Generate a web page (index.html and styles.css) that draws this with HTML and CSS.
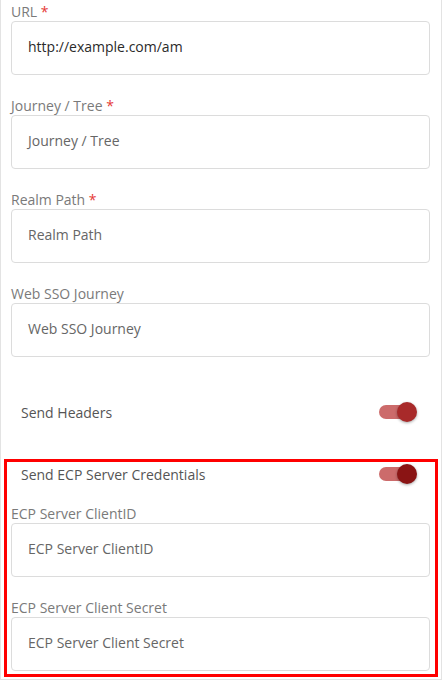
FILE: index.html
```html
<!DOCTYPE html>
<html>
<head>
<meta charset="utf-8">
<link rel="stylesheet" href="styles.css">
</head>
<body>
<div class="panel">
  <div class="field">
    <label class="label">URL <span class="req">*</span></label>
    <div class="input value">http://example.com/am</div>
  </div>
  <div class="field">
    <label class="label">Journey / Tree <span class="req">*</span></label>
    <div class="input">Journey / Tree</div>
  </div>
  <div class="field">
    <label class="label">Realm Path <span class="req">*</span></label>
    <div class="input">Realm Path</div>
  </div>
  <div class="field">
    <label class="label">Web SSO Journey</label>
    <div class="input">Web SSO Journey</div>
  </div>
  <div class="toggle-row first">
    <span class="toggle-label">Send Headers</span>
    <span class="switch"><span class="track"></span><span class="thumb"></span></span>
  </div>
  <div class="highlight">
    <div class="toggle-row">
      <span class="toggle-label">Send ECP Server Credentials</span>
      <span class="switch focused"><span class="track"></span><span class="thumb"></span></span>
    </div>
    <div class="field ecp">
      <label class="label">ECP Server ClientID</label>
      <div class="input">ECP Server ClientID</div>
    </div>
    <div class="field last">
      <label class="label">ECP Server Client Secret</label>
      <div class="input">ECP Server Client Secret</div>
    </div>
  </div>
</div>
</body>
</html>
```
FILE: styles.css
```css
* { box-sizing: border-box; }
html, body { margin: 0; padding: 0; background: #fff; }
body {
  font-family: "Open Sans", "Noto Sans", sans-serif;
  font-size: 14px;
  width: 444px;
  height: 682px;
  overflow: hidden;
}
.panel {
  width: 442px;
  border-left: 1px solid #e3e3e3;
  border-right: 1px solid #e3e3e3;
  border-bottom: 1px solid #e3e3e3;
  padding: 3px 11px 2px 10px;
}
.field { margin-bottom: 22px; }
.label {
  display: block;
  height: 18px;
  line-height: 18px;
  color: #7a7a7a;
  font-size: 14px;
}
.req { color: #e53935; }
.input {
  height: 54px;
  border: 1px solid #dcdcdc;
  border-radius: 4px;
  padding: 0 16px 3px;
  display: flex;
  align-items: center;
  color: #666;
  font-size: 14px;
}
.input.value { color: #2a2a2a; }
.toggle-row {
  display: flex;
  align-items: center;
  justify-content: space-between;
  height: 24px;
  padding-left: 10px;
  padding-right: 13px;
}
.toggle-row.first { margin-top: 43px; margin-bottom: 35px; }
.toggle-label { color: #555; font-size: 14px; }
.switch {
  position: relative;
  width: 38px;
  height: 20px;
  display: block;
}
.track {
  position: absolute;
  left: 0;
  top: 3px;
  width: 34px;
  height: 14px;
  border-radius: 7px;
  background: #cc6b6b;
}
.thumb {
  position: absolute;
  right: 0;
  top: 0;
  width: 20px;
  height: 20px;
  border-radius: 50%;
  background: #a82a2a;
  box-shadow: 0 1px 3px rgba(0,0,0,0.35);
}
.switch.focused .thumb { background: #8a1414; }
.highlight {
  margin: 0 -8px 0 -7px;
  border: 3px solid #ff0000;
  padding: 0 5px 3px 4px;
}
.field.ecp { margin-top: 19px; }
.field.last { margin-bottom: 0; }
```
